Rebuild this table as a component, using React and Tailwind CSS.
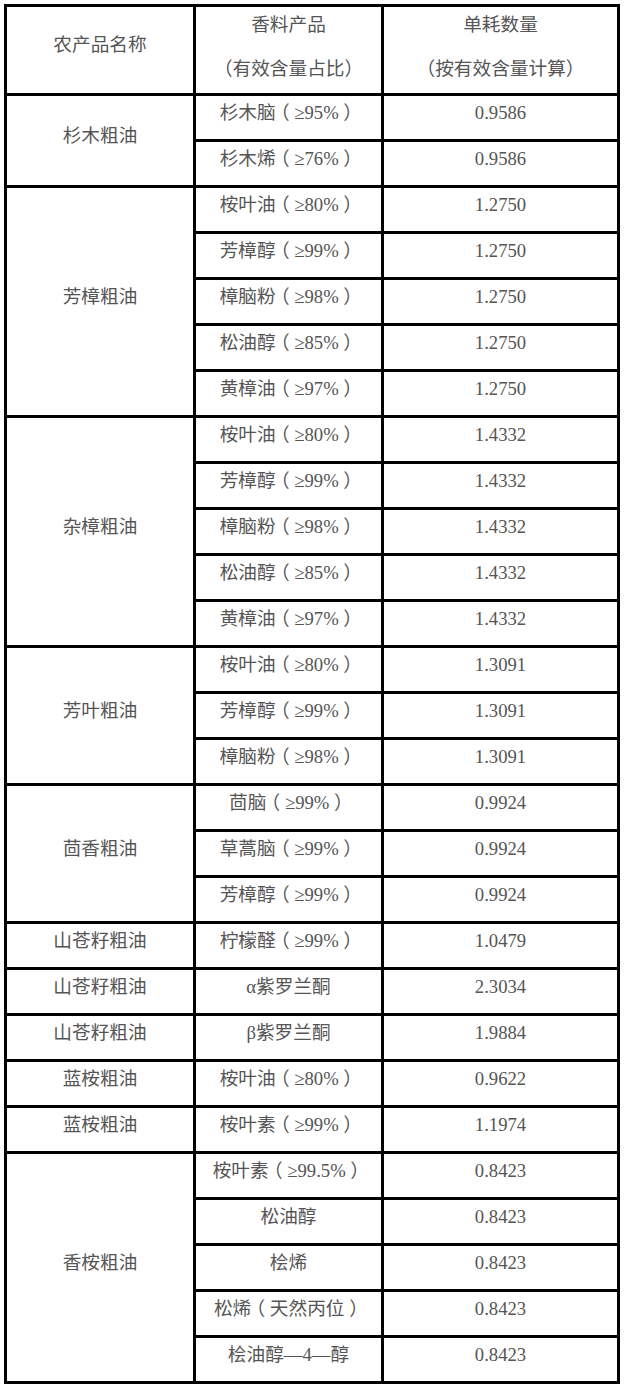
import React from "react";

const groups = [
  { name: "杉木粗油", items: [["杉木脑（≥95%）", "0.9586"], ["杉木烯（≥76%）", "0.9586"]] },
  {
    name: "芳樟粗油",
    items: [
      ["桉叶油（≥80%）", "1.2750"],
      ["芳樟醇（≥99%）", "1.2750"],
      ["樟脑粉（≥98%）", "1.2750"],
      ["松油醇（≥85%）", "1.2750"],
      ["黄樟油（≥97%）", "1.2750"],
    ],
  },
  {
    name: "杂樟粗油",
    items: [
      ["桉叶油（≥80%）", "1.4332"],
      ["芳樟醇（≥99%）", "1.4332"],
      ["樟脑粉（≥98%）", "1.4332"],
      ["松油醇（≥85%）", "1.4332"],
      ["黄樟油（≥97%）", "1.4332"],
    ],
  },
  {
    name: "芳叶粗油",
    items: [
      ["桉叶油（≥80%）", "1.3091"],
      ["芳樟醇（≥99%）", "1.3091"],
      ["樟脑粉（≥98%）", "1.3091"],
    ],
  },
  {
    name: "茴香粗油",
    items: [
      ["茴脑（≥99%）", "0.9924"],
      ["草蒿脑（≥99%）", "0.9924"],
      ["芳樟醇（≥99%）", "0.9924"],
    ],
  },
  { name: "山苍籽粗油", items: [["柠檬醛（≥99%）", "1.0479"]] },
  { name: "山苍籽粗油", items: [["α紫罗兰酮", "2.3034"]] },
  { name: "山苍籽粗油", items: [["β紫罗兰酮", "1.9884"]] },
  { name: "蓝桉粗油", items: [["桉叶油（≥80%）", "0.9622"]] },
  { name: "蓝桉粗油", items: [["桉叶素（≥99%）", "1.1974"]] },
  {
    name: "香桉粗油",
    items: [
      ["桉叶素（≥99.5%）", "0.8423"],
      ["松油醇", "0.8423"],
      ["桧烯", "0.8423"],
      ["松烯（天然丙位）", "0.8423"],
      ["桧油醇—4—醇", "0.8423"],
    ],
  },
];

const spanClass = { 1: "", 2: "row-span-2", 3: "row-span-3", 5: "row-span-5" };

const cell = "bg-white flex items-center justify-center pb-[10px] whitespace-nowrap";

// 括号居中显示（原图括号在一个字宽内居中）
function Product({ text }) {
  const parts = text.split(/([（）])/);
  return (
    <span>
      {parts.map((p, i) =>
        p === "（" || p === "）" ? (
          <span key={i} className="inline-block w-[1em] text-center [font-feature-settings:'halt']">
            {p}
          </span>
        ) : (
          <React.Fragment key={i}>{p}</React.Fragment>
        )
      )}
    </span>
  );
}

export default function App() {
  return (
    <div className="bg-white min-h-[1388px] pt-[4px] pl-[4px]">
      <div
        className="grid w-[616px] grid-cols-[186px_185px_233px] grid-rows-[86px] auto-rows-[43px] gap-[3px] p-[3px] bg-black text-[#555] text-[18.67px] leading-[24px]"
        style={{ fontFamily: '"Liberation Serif", "Noto Sans CJK SC", serif' }}
      >
        {/* 表头 */}
        <div className={cell}>农产品名称</div>
        <div className="bg-white flex flex-col items-center pt-[6px] gap-[20px]">
          <div>香料产品</div>
          <div>（有效含量占比）</div>
        </div>
        <div className="bg-white flex flex-col items-center pt-[6px] gap-[20px]">
          <div>单耗数量</div>
          <div>（按有效含量计算）</div>
        </div>

        {groups.map((g, gi) => (
          <React.Fragment key={gi}>
            <div className={`${cell} col-start-1 ${spanClass[g.items.length]}`}>{g.name}</div>
            {g.items.map(([product, qty], i) => (
              <React.Fragment key={i}>
                <div className={`${cell} col-start-2`}>
                  <Product text={product} />
                </div>
                <div className={`${cell} col-start-3`}>{qty}</div>
              </React.Fragment>
            ))}
          </React.Fragment>
        ))}
      </div>
    </div>
  );
}
